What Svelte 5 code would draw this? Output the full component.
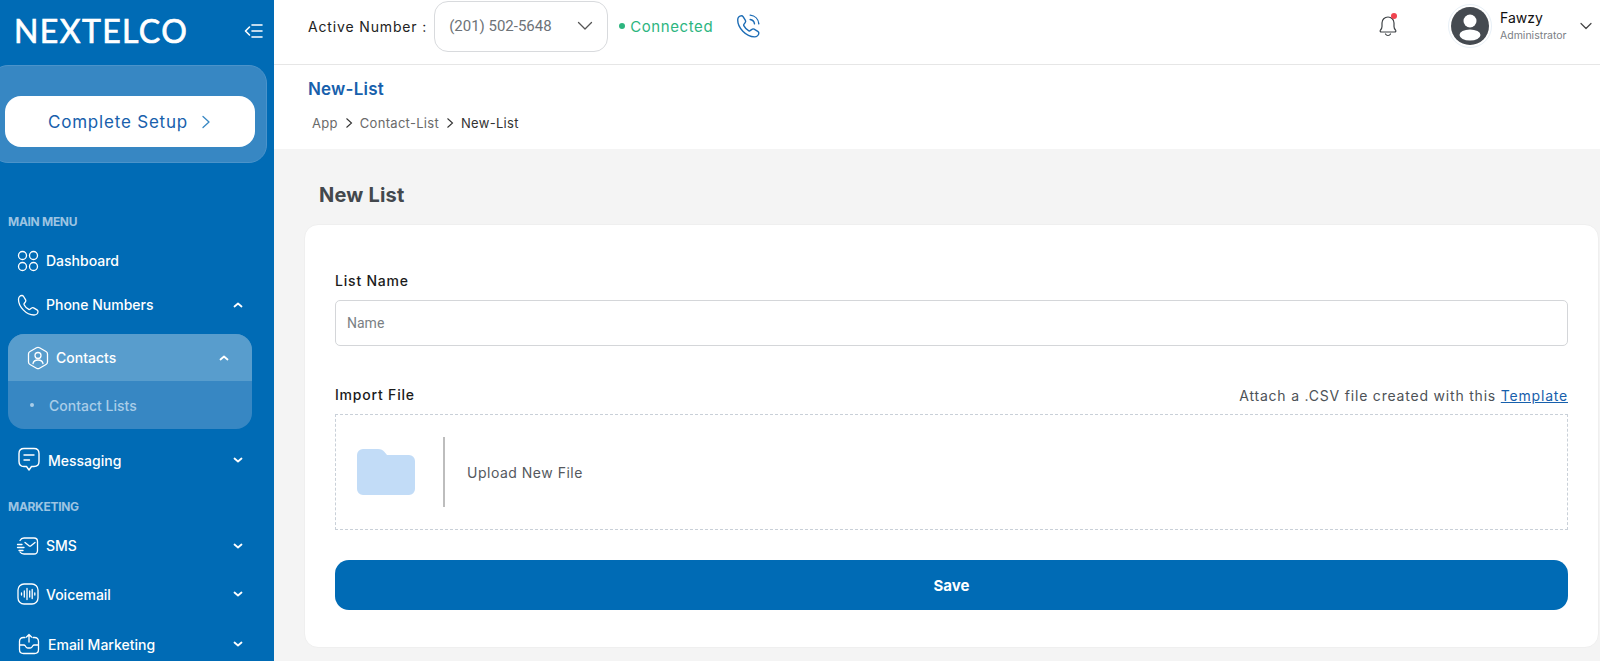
<script lang="ts">
  const marketing = [
    { label: 'SMS', icon: 'sms', h: 47 },
    { label: 'Voicemail', icon: 'voicemail', h: 50 },
    { label: 'Email Marketing', icon: 'email', h: 50 },
  ];
</script>

{#snippet chevron(up: boolean)}
  <svg class="chev" width="12" height="12" viewBox="0 0 12 12" fill="none" stroke="currentColor" stroke-width="1.8" stroke-linecap="round" stroke-linejoin="round">
    <polyline points={up ? '2.5 7.5 6 4.5 9.5 7.5' : '2.5 4.5 6 7.5 9.5 4.5'} />
  </svg>
{/snippet}

{#snippet navIcon(name: string)}
  <svg width="24" height="24" viewBox="0 0 24 24" fill="none" stroke="currentColor" stroke-width="1.3" stroke-linecap="round" stroke-linejoin="round">
    {#if name === 'sms'}
      <path d="M4 6.500C5 4.500 6.500 4 8 4h10c2 0 3.500 1.500 3.500 3.500v9c0 2-1.500 3.500-3.500 3.500H8c-1.500 0-3-.5-4-2" />
      <path d="M9 8.500l4 3.200c.6.500 1.400.500 2 0l4-3.200" />
      <path d="M1.500 10.500H6M1.500 13.500H8M3 16.500h4" />
    {:else if name === 'voicemail'}
      <rect x="2" y="2" width="20" height="20" rx="6" />
      <path d="M5.500 11v2M8.300 9v6M11 6.500v11M13.700 9v6M16.200 7.500v9M18.800 11v2" />
    {:else if name === 'email'}
      <path d="M8 5.500H6.500C4 5.500 2.500 7 2.500 9.500v8c0 2.500 1.500 4 4 4h11c2.500 0 4-1.500 4-4v-8c0-2.500-1.500-4-4-4H16" />
      <path d="M2.500 13h4.200c.8 0 1.300.4 1.700 1l.6 1c.4.700 1 1 1.800 1h2.400c.8 0 1.400-.3 1.800-1l.6-1c.4-.6.900-1 1.700-1h3.700" />
      <path d="M12 10V2.500M9.500 5L12 2.500 14.500 5" />
    {/if}
  </svg>
{/snippet}

<div class="shell">
  <aside class="sidebar">
    <div class="brand">
      <span class="logo">NEXTELCO</span>
      <svg class="collapse" width="20" height="20" viewBox="0 0 20 20" fill="none" stroke="currentColor" stroke-width="1.600" stroke-linecap="round" stroke-linejoin="round">
        <polyline points="5.500 6 1.500 10 5.500 14" />
        <path d="M8 4h10M8 10h10M8 16h10" />
      </svg>
    </div>

    <div class="setup-card">
      <button class="setup-btn">
        Complete Setup
        <svg width="12" height="16" viewBox="0 0 12 16" fill="none" stroke="currentColor" stroke-width="1.300" stroke-linecap="round" stroke-linejoin="round"><polyline points="3 2.500 9 8 3 13.500" /></svg>
      </button>
    </div>

    <div class="section first">MAIN MENU</div>
    <div class="item dash">
      <svg width="24" height="24" viewBox="0 0 24 24" fill="none" stroke="currentColor" stroke-width="1.300">
        <circle cx="6.500" cy="6.500" r="4" /><circle cx="17.500" cy="6.500" r="4" />
        <circle cx="6.500" cy="17.500" r="4" /><circle cx="17.500" cy="17.500" r="4" />
      </svg>
      <span>Dashboard</span>
    </div>
    <div class="item phone">
      <svg width="24" height="24" viewBox="0 0 24 24" fill="none" stroke="currentColor" stroke-width="1.300" stroke-linecap="round" stroke-linejoin="round">
        <path d="M2.500 6.500c0-2 1.500-4 3.500-4 .8 0 1.200.4 1.600 1l2 3.400c.4.700.3 1.400-.2 2L8.200 10.500c-.3.400-.3.800-.1 1.200 1 2 2.700 3.700 4.700 4.700.4.200.8.200 1.200-.1l1.600-1.200c.6-.5 1.300-.6 2-.2l3.400 2c.6.400 1 .8 1 1.600 0 2-2 3.500-4 3.500C10 22 2.500 13.500 2.500 6.500z" />
      </svg>
      <span>Phone Numbers</span>
      {@render chevron(true)}
    </div>

    <div class="group">
      <div class="group-head">
        <svg width="24" height="24" viewBox="0 0 24 24" fill="none" stroke="currentColor" stroke-width="1.300" stroke-linecap="round" stroke-linejoin="round">
          <path d="M10.500 1.800c.9-.5 2.100-.5 3 0l6.500 3.700c.9.500 1.500 1.500 1.500 2.600v7.800c0 1.100-.6 2.100-1.500 2.600l-6.500 3.700c-.9.500-2.100.5-3 0L4 18.500c-.9-.5-1.500-1.500-1.500-2.600V8.100c0-1.100.6-2.100 1.500-2.600z" />
          <circle cx="12" cy="9.500" r="3" />
          <path d="M7 17.500c.5-2.500 2.500-3.500 5-3.500s4.500 1 5 3.500" />
        </svg>
        <span>Contacts</span>
        {@render chevron(true)}
      </div>
      <div class="group-sub"><i></i>Contact Lists</div>
    </div>

    <div class="item msg">
      <svg width="24" height="26" viewBox="0 0 24 26" fill="none" stroke="currentColor" stroke-width="1.400" stroke-linecap="round" stroke-linejoin="round">
        <path d="M7 1.500h10c3 0 5 2 5 5v8c0 3-2 5-5 5h-2.500L12 23l-2.500-3.500H7c-3 0-5-2-5-5v-8c0-3 2-5 5-5z" />
        <path d="M7 8h10M7 13h5.500" />
      </svg>
      <span>Messaging</span>
      {@render chevron(false)}
    </div>

    <div class="section">MARKETING</div>
    {#each marketing as m}
      <div class="item mk" class:wide={m.icon === 'email'} style="height: {m.h}px">
        {@render navIcon(m.icon)}
        <span>{m.label}</span>
        {@render chevron(false)}
      </div>
    {/each}
  </aside>

  <div class="main">
    <header class="topbar">
      <span class="active-label">Active Number :</span>
      <div class="number-select">
        <span>(201) 502-5648</span>
        <svg width="16" height="16" viewBox="0 0 16 16" fill="none" stroke="currentColor" stroke-width="1.300" stroke-linecap="round" stroke-linejoin="round"><polyline points="1.500 4.500 8 11 14.500 4.500" /></svg>
      </div>
      <span class="status"><i></i>Connected</span>
      <svg class="call" width="26" height="26" viewBox="0 0 24 24" fill="none" stroke="currentColor" stroke-width="1.300" stroke-linecap="round" stroke-linejoin="round">
        <path d="M2.500 6.500c0-2 1.500-4 3.500-4 .8 0 1.200.4 1.600 1l2 3.400c.4.700.3 1.400-.2 2L8.200 10.500c-.3.400-.3.800-.1 1.200 1 2 2.700 3.700 4.700 4.700.4.200.8.200 1.200-.1l1.600-1.200c.6-.5 1.300-.6 2-.2l3.400 2c.6.400 1 .8 1 1.600 0 2-2 3.500-4 3.500C10 22 2.500 13.500 2.500 6.500z" />
        <path d="M14 6c2.200.3 3.700 1.800 4 4M14 2c4.400.4 7.600 3.600 8 8" />
      </svg>

      <div class="top-right">
        <div class="bell">
          <svg width="22" height="24" viewBox="0 0 22 24" fill="none" stroke="#3f4347" stroke-width="1.200" stroke-linecap="round" stroke-linejoin="round">
            <path d="M11 3c-3.500 0-6 2.700-6 6v3.500c0 1.200-.6 2.500-1.500 3.500-.8 1-.3 2 1 2h13c1.300 0 1.800-1 1-2-.9-1-1.500-2.300-1.500-3.500V9c0-3.300-2.500-6-6-6z" />
            <path d="M8.500 20c.5 1 1.400 1.500 2.500 1.500s2-.5 2.500-1.500" />
          </svg>
          <i></i>
        </div>
        <div class="avatar">
          <svg width="38" height="38" viewBox="0 0 38 38">
            <circle cx="19" cy="19" r="19" fill="#454a50" />
            <circle cx="19" cy="14" r="6.500" fill="#fff" />
            <ellipse cx="19" cy="28" rx="10.500" ry="5.500" fill="#fff" />
          </svg>
        </div>
        <div class="user">
          <strong>Fawzy</strong>
          <small>Administrator</small>
        </div>
        <svg class="user-chev" width="14" height="14" viewBox="0 0 14 14" fill="none" stroke="#444" stroke-width="1.200" stroke-linecap="round" stroke-linejoin="round"><polyline points="2 4.500 7 9.500 12 4.500" /></svg>
      </div>
    </header>

    <div class="subhead">
      <h2>New-List</h2>
      <nav class="crumbs">
        <span>App</span>
        <svg width="12" height="12" viewBox="0 0 12 12" fill="none" stroke="currentColor" stroke-width="1.100"><polyline points="3.500 1.500 8.500 6 3.500 10.500" /></svg>
        <span>Contact-List</span>
        <svg width="12" height="12" viewBox="0 0 12 12" fill="none" stroke="currentColor" stroke-width="1.100"><polyline points="3.500 1.500 8.500 6 3.500 10.500" /></svg>
        <span class="current">New-List</span>
      </nav>
    </div>

    <div class="content">
      <h1>New List</h1>
      <section class="card">
        <label class="field-label" for="list-name">List Name</label>
        <input id="list-name" class="text-input" placeholder="Name" />

        <div class="import-row">
          <span class="field-label">Import File</span>
          <span class="hint">Attach a .CSV file created with this <a href="#template">Template</a></span>
        </div>
        <div class="dropzone">
          <svg class="folder" width="58" height="46" viewBox="0 0 58 46">
            <path d="M0 6a6 6 0 0 1 6-6h15c3 0 5 1 6.500 3l2.500 3h22a6 6 0 0 1 6 6v28a6 6 0 0 1-6 6H6a6 6 0 0 1-6-6z" fill="#c2dcf7" />
          </svg>
          <div class="divider"></div>
          <span class="upload">Upload New File</span>
        </div>

        <button class="save">Save</button>
      </section>
    </div>
  </div>
</div>

<style>
  :global(body) {
    margin: 0;
    overflow: hidden;
    background: #f4f4f4;
    font-family: Inter, "Open Sans", sans-serif;
  }

  .shell {
    display: flex;
    width: 1600px;
    height: 661px;
    overflow: hidden;
  }

  .sidebar {
    flex: 0 0 274px;
    box-sizing: border-box;
    background: #006bb5;
    color: #fff;
    font-family: Inter, "Open Sans", sans-serif;
    display: flex;
    flex-direction: column;
    overflow: hidden;
  }

  .brand {
    flex: 0 0 65px;
    display: flex;
    align-items: center;
    justify-content: space-between;
    padding: 0 10px 4px 14px;
    box-sizing: border-box;
  }
  .logo {
    font-family: Lato, Inter, sans-serif;
    font-size: 32px;
    font-weight: 400;
    letter-spacing: 1.4px;
    line-height: 1;
    -webkit-text-stroke: 0.7px #fff;
  }

  .setup-card {
    flex: 0 0 98px;
    box-sizing: border-box;
    width: 277px;
    margin-left: -10px;
    padding: 30px 12px 0 14px;
    background: #3787c3;
    border: 1px solid #4b93ca;
    border-radius: 18px;
  }
  .setup-btn {
    width: 250px;
    height: 51px;
    border: 0;
    border-radius: 16px;
    background: #fff;
    color: #1760ac;
    font-family: Inter, sans-serif;
    font-size: 17px;
    letter-spacing: 0.8px;
    display: flex;
    align-items: center;
    justify-content: center;
    gap: 12px;
  }
  .setup-btn svg { color: #3787c3; }

  .section {
    font-size: 12px;
    font-weight: 700;
    letter-spacing: -0.3px;
    color: #9cc4e2;
    padding-left: 8px;
    line-height: 16px;
    margin-top: 15px;
    flex: none;
  }
  .section.first { margin-top: 51px; }

  .item {
    display: flex;
    align-items: center;
    height: 43px;
    padding: 0 30px 0 16px;
    font-size: 14px;
    font-weight: 500;
    gap: 6px;
    flex: none;
  }
  .item span { flex: 1; }
  .item.dash { margin-top: 8px; height: 45px; }
  .item.msg { height: 48px; margin-top: 7px; padding-left: 17px; gap: 7px; }
  .item.wide { padding-left: 17px; gap: 7px; }
  .section + .item.mk { margin-top: 7px; }
  .chev { flex: none; }

  .group {
    margin: 8px 22px 0 8px;
    height: 95px;
    background: #3787c3;
    border-radius: 16px;
    overflow: hidden;
    flex: none;
  }
  .group-head {
    height: 47px;
    background: #589dcd;
    display: flex;
    align-items: center;
    padding: 0 22px 0 18px;
    gap: 6px;
    font-size: 14px;
    font-weight: 500;
  }
  .group-head span { flex: 1; }
  .group-sub {
    height: 48px;
    display: flex;
    align-items: center;
    padding-left: 22px;
    font-size: 14px;
    font-weight: 500;
    color: #a9cde8;
  }
  .group-sub i {
    width: 4px;
    height: 4px;
    border-radius: 50%;
    background: #a9cde8;
    margin-right: 15px;
  }

  .main {
    flex: 1;
    min-width: 0;
    display: flex;
    flex-direction: column;
  }

  .topbar {
    flex: 0 0 65px;
    box-sizing: border-box;
    background: #fff;
    border-bottom: 1px solid #e6e6e6;
    display: flex;
    align-items: center;
    padding: 0 7px 12px 34px;
  }
  .active-label {
    font-size: 14px;
    font-weight: 400;
    letter-spacing: 0.85px;
    color: #222;
    margin-right: 7px;
  }
  .number-select {
    box-sizing: border-box;
    width: 174px;
    height: 51px;
    border: 1px solid #d8dadd;
    border-radius: 14px;
    display: flex;
    align-items: center;
    justify-content: space-between;
    padding: 0 14px;
    color: #6d7378;
    font-family: Roboto, sans-serif;
    font-size: 15px;
  }
  .number-select svg { color: #555; }
  .status {
    margin-left: 11px;
    font-size: 15px;
    color: #2db57f;
    letter-spacing: 0.6px;
    display: flex;
    align-items: center;
  }
  .status i {
    width: 6px;
    height: 6px;
    border-radius: 50%;
    background: #2db57f;
    margin-right: 5px;
  }
  .call { margin-left: 22px; color: #1c6cb5; }

  .top-right {
    margin-left: auto;
    display: flex;
    align-items: center;
  }
  .bell { position: relative; width: 22px; height: 24px; margin-right: 49px; }
  .bell i {
    position: absolute;
    top: -1px;
    right: 2px;
    width: 6px;
    height: 6px;
    border-radius: 50%;
    background: #f0434f;
  }
  .avatar {
    width: 38px;
    height: 38px;
    padding: 2px;
    border: 1px solid #e8f0f7;
    border-radius: 50%;
    margin-right: 8px;
    line-height: 0;
  }
  .user { display: flex; flex-direction: column; width: 81px; }
  .user strong {
    font-size: 14px;
    font-weight: 400;
    line-height: 19px;
    color: #111;
  }
  .user small {
    font-size: 10.500px;
    line-height: 17px;
    color: #7b8085;
  }
  .user-chev { margin-left: -2px; }

  .subhead {
    flex: 0 0 84px;
    box-sizing: border-box;
    background: #fff;
    padding: 13px 34px 0;
  }
  .subhead h2 {
    margin: 0;
    font-size: 17px;
    font-weight: 600;
    line-height: 22px;
    color: #1760ac;
    letter-spacing: 0.2px;
  }
  .crumbs {
    display: flex;
    align-items: center;
    gap: 5px;
    margin: 14px 0 0 4px;
    font-size: 13px;
    line-height: 18px;
    letter-spacing: 0.3px;
    color: #6a6a6a;
  }
  .crumbs svg { color: #333; }
  .crumbs .current { color: #333; }

  .content {
    flex: 1;
    padding: 33px 1px 0 30px;
    min-height: 0;
  }
  .content h1 {
    margin: 0 0 16px 15px;
    font-size: 20px;
    font-weight: 700;
    line-height: 26px;
    letter-spacing: 0.2px;
    color: #43484d;
  }

  .card {
    box-sizing: border-box;
    height: 424px;
    background: #fff;
    border: 1px solid #efefef;
    border-radius: 14px;
    padding: 46px 30px 0;
    display: flex;
    flex-direction: column;
  }

  .field-label {
    font-size: 14px;
    font-weight: 500;
    line-height: 20px;
    letter-spacing: 0.8px;
    color: #1b1b1b;
  }
  .text-input {
    box-sizing: border-box;
    width: 100%;
    height: 46px;
    margin-top: 9px;
    padding: 0 11px;
    border: 1px solid #d4d6d9;
    border-radius: 5px;
    background: #fff;
    font-family: Roboto, sans-serif;
    font-size: 14px;
  }
  .text-input::placeholder { color: #7a7f84; opacity: 1; }

  .import-row {
    display: flex;
    justify-content: space-between;
    align-items: center;
    margin-top: 39px;
    height: 20px;
  }
  .hint {
    font-size: 14px;
    color: #4d5257;
    letter-spacing: 0.8px;
  }
  .hint a { color: #1760ac; }

  .dropzone {
    box-sizing: border-box;
    height: 116px;
    margin-top: 9px;
    border: 1px dashed #c9d0d8;
    display: flex;
    align-items: center;
    padding-left: 21px;
  }
  .divider {
    height: 70px;
    margin-left: 28px;
    border-left: 2px solid #bdbdbd;
    box-sizing: border-box;
  }
  .folder { flex: none; }
  .upload {
    margin-left: 22px;
    font-size: 14px;
    letter-spacing: 0.5px;
    color: #55595e;
  }

  .save {
    height: 50px;
    margin-top: 30px;
    border: 0;
    border-radius: 14px;
    background: #006bb5;
    color: #fff;
    font-family: Inter, sans-serif;
    font-size: 15px;
    font-weight: 700;
  }
</style>
